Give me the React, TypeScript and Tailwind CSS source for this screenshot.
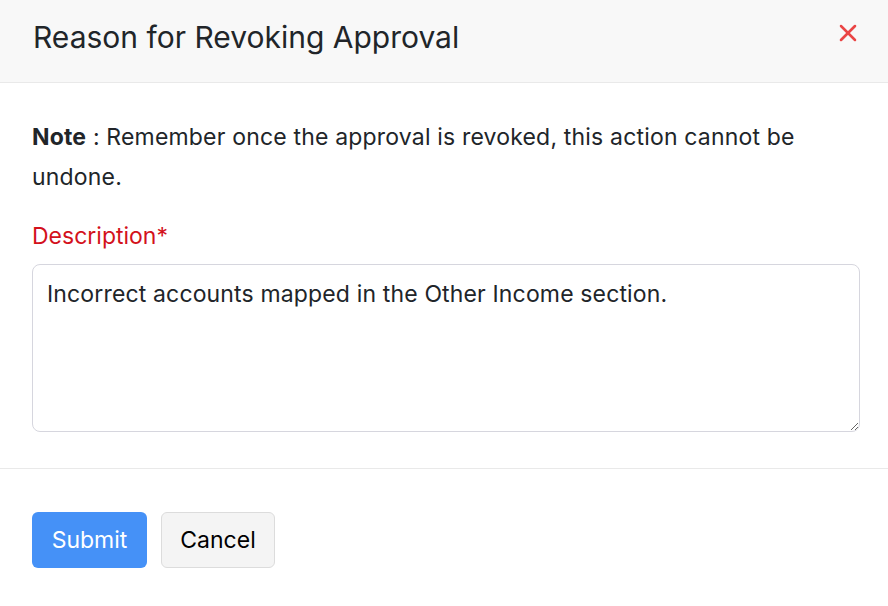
import { X } from "lucide-react";

export default function App() {
  return (
    <div className="w-[888px] h-[606px] bg-white text-[#212529] font-['Inter',sans-serif] overflow-hidden">
      <div className="h-[83px] flex items-start justify-between pl-[33px] pr-[26px] pt-[18px] bg-[#f8f8f8] border-b border-[#e9e9e9]">
        <h1 className="text-[30px] leading-[38px] font-normal text-[#212529]">
          Reason for Revoking Approval
        </h1>
        <button className="text-[#ea4545] mt-[1px]">
          <X className="w-[28px] h-[28px]" strokeWidth={2.2} />
        </button>
      </div>

      <div className="pl-[32px] pr-[28px] pt-[34px] pb-[36px] border-b border-[#e9e9e9]">
        <p className="text-[23px] leading-[40px] tracking-[0.18px]">
          <span className="font-bold">Note</span> : Remember once the approval is revoked, this action cannot be undone.
        </p>
        <label className="block mt-[19px] text-[23px] leading-[40px] text-[#d3111c]">
          Description*
        </label>
        <textarea
          className="mt-[8px] block w-full h-[168px] rounded-[8px] border border-[#d6d6de] px-[14px] py-[13px] text-[23px] tracking-[0.15px] leading-[33px] text-[#212529] outline-none resize-y"
          defaultValue="Incorrect accounts mapped in the Other Income section."
        />
      </div>

      <div className="px-[32px] pt-[43px] flex gap-[14px]">
        <button className="h-[56px] w-[115px] rounded-[6px] bg-[#4591f7] text-white text-[23px]">
          Submit
        </button>
        <button className="h-[56px] w-[114px] rounded-[6px] bg-[#f4f4f4] border border-[#dcdcdc] text-black text-[23px]">
          Cancel
        </button>
      </div>
    </div>
  );
}
